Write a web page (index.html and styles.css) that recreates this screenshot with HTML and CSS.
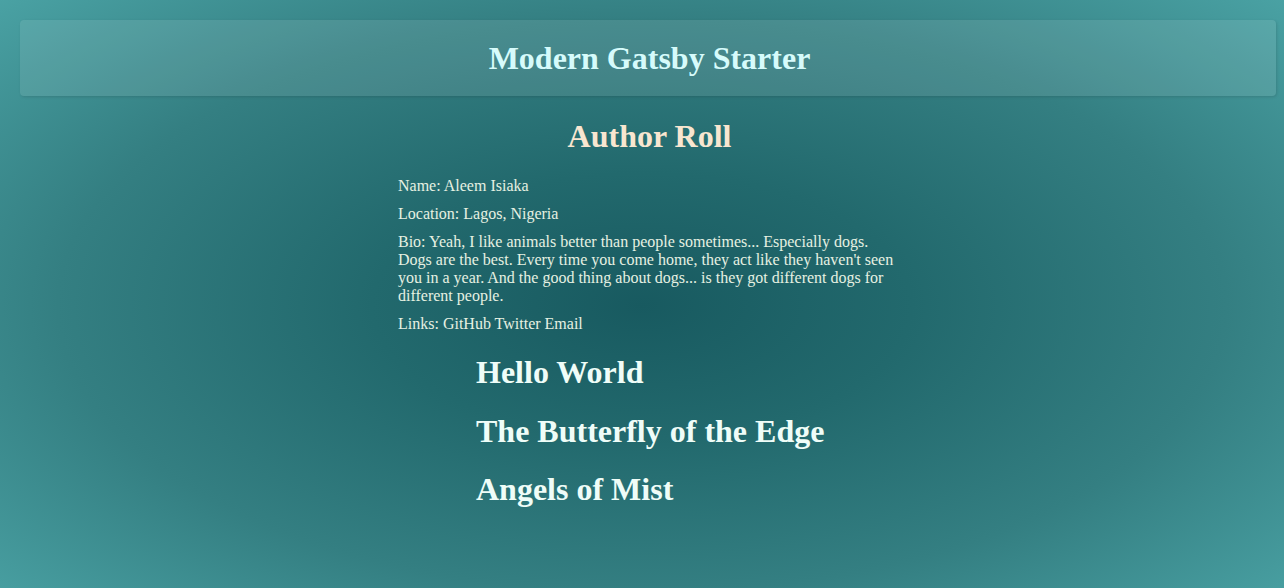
FILE: index.html
```html
<!DOCTYPE html>
<html lang="en">
<head>
<meta charset="utf-8">
<title>Modern Gatsby Starter</title>
<link rel="stylesheet" href="styles.css">
</head>
<body>
<div class="page">
  <header class="site-header">
    <h1 class="site-title">Modern Gatsby Starter</h1>
  </header>
  <main class="main">
    <h1 class="section-title">Author Roll</h1>
    <section class="author">
      <p>Name: Aleem Isiaka</p>
      <p>Location: Lagos, Nigeria</p>
      <p>Bio: Yeah, I like animals better than people sometimes... Especially dogs. Dogs are the best. Every time you come home, they act like they haven't seen you in a year. And the good thing about dogs... is they got different dogs for different people.</p>
      <p>Links: <a href="#">GitHub</a> <a href="#">Twitter</a> <a href="#">Email</a></p>
    </section>
    <section class="posts">
      <h2 class="post-title">Hello World</h2>
      <h2 class="post-title">The Butterfly of the Edge</h2>
      <h2 class="post-title">Angels of Mist</h2>
    </section>
  </main>
</div>
</body>
</html>
```
FILE: styles.css
```css
html, body {
  margin: 0;
  padding: 0;
}
body {
  min-height: 100vh;
  font-family: "Liberation Serif", "Times New Roman", serif;
  font-size: 16px;
  color: #e6f1e2;
  background: radial-gradient(ellipse 70% 75% at 50% 52%, #185a60 0%, #22696d 30%, #347f82 65%, #4aa2a4 100%);
  background-attachment: fixed;
}
.page {
  padding: 20px 8px 0 20px;
}
.site-header {
  background: rgba(255, 255, 255, 0.1);
  border-radius: 4px;
  box-shadow: 1px 1px 3px rgba(0, 0, 0, 0.12);
  padding: 20px 20px 20px 23px;
  text-align: center;
}
.site-title {
  margin: 0;
  font-size: 32px;
  line-height: 36px;
  font-weight: bold;
  color: #d6fbfb;
}
.main {
  display: block;
}
.section-title {
  margin: 22px 0;
  padding-left: 3px;
  font-size: 32px;
  line-height: 37px;
  font-weight: bold;
  color: #f8e6d0;
  text-align: center;
}
.author {
  width: 500px;
  margin: 0 auto;
}
.author p {
  margin: 10px 0;
  line-height: 18px;
}
.author a {
  color: inherit;
  text-decoration: none;
}
.posts {
  width: 344px;
  margin: 0 auto;
}
.post-title {
  margin: 21px 0;
  font-size: 32px;
  line-height: 37px;
  font-weight: bold;
  color: #effdf8;
  white-space: nowrap;
}
.post-title + .post-title {
  margin-top: 21.5px;
}
```
